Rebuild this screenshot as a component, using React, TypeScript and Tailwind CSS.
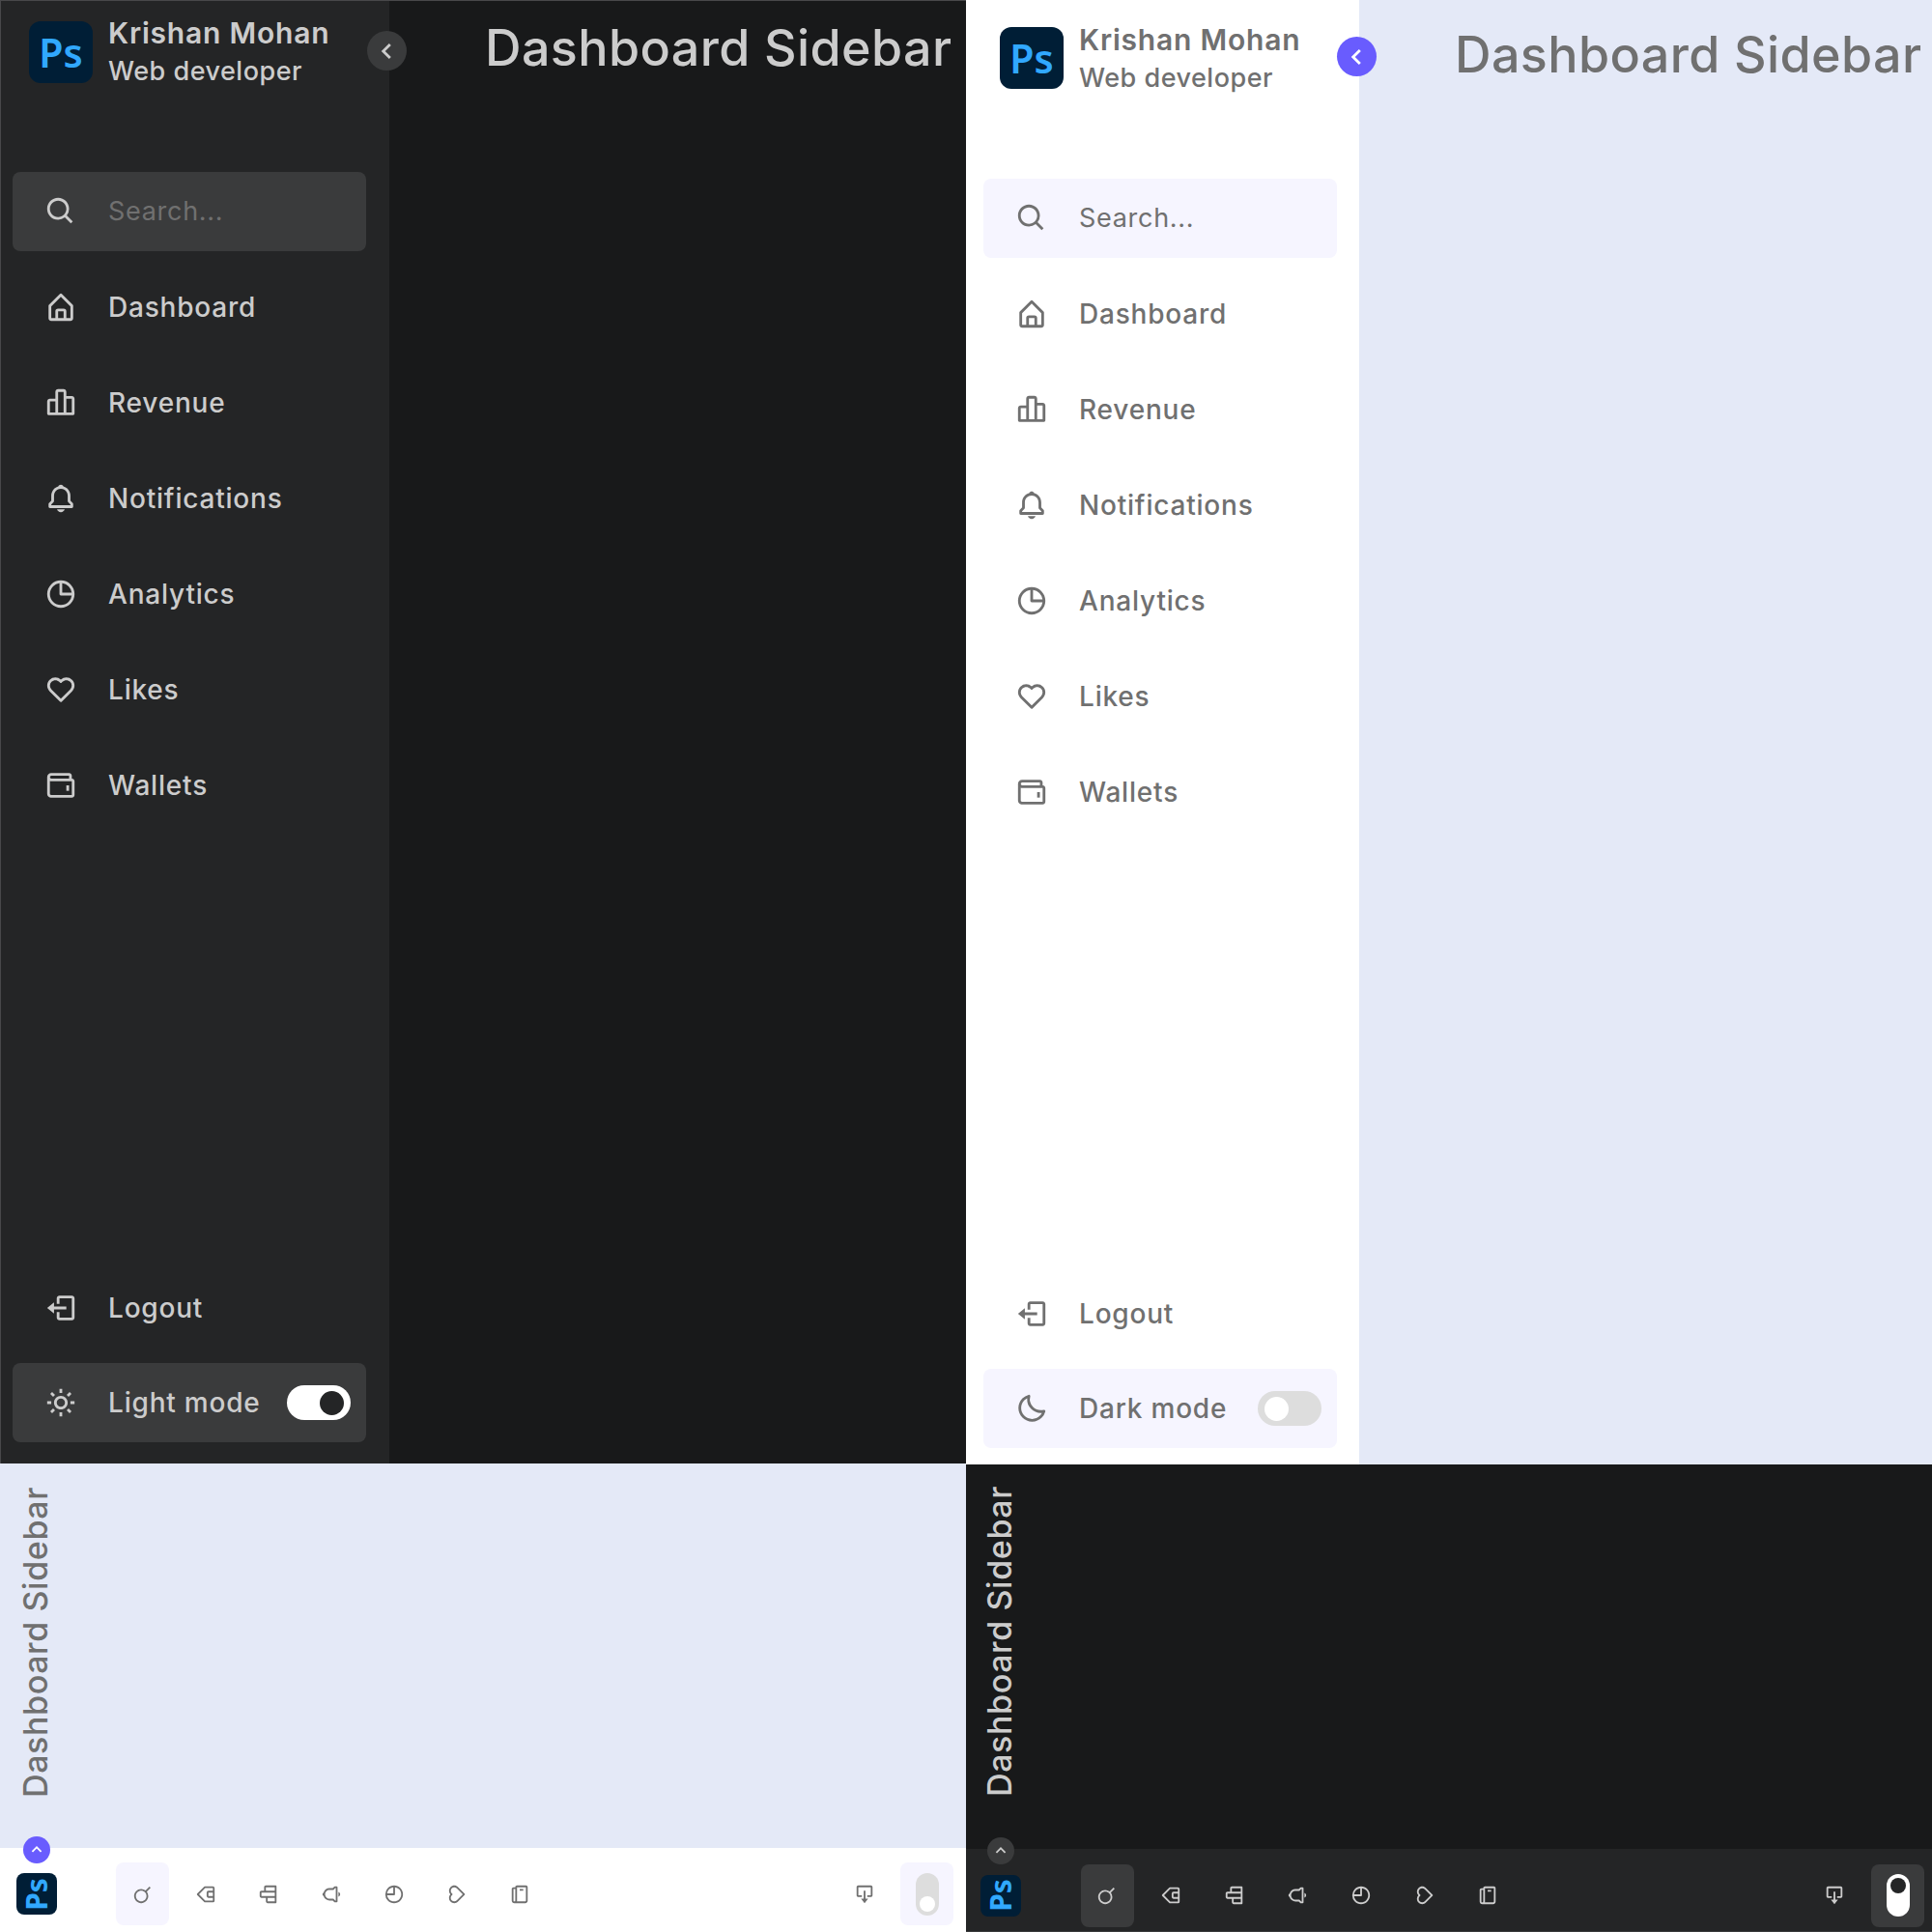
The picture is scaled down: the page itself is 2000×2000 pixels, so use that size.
import { IconType } from 'react-icons';
import {
    BiBarChartAlt2,
    BiBell,
    BiChevronLeft,
    BiChevronUp,
    BiHeart,
    BiHomeAlt,
    BiLogOut,
    BiMoon,
    BiPieChartAlt,
    BiSearch,
    BiSun,
    BiWallet,
} from 'react-icons/bi';

const font = "font-['Inter','Liberation_Sans',sans-serif]";

const links: { label: string; icon: IconType }[] = [
    { label: 'Dashboard', icon: BiHomeAlt },
    { label: 'Revenue', icon: BiBarChartAlt2 },
    { label: 'Notifications', icon: BiBell },
    { label: 'Analytics', icon: BiPieChartAlt },
    { label: 'Likes', icon: BiHeart },
    { label: 'Wallets', icon: BiWallet },
];

const barIcons: IconType[] = [BiSearch, BiHomeAlt, BiBarChartAlt2, BiBell, BiPieChartAlt, BiHeart, BiWallet];

function Logo({ vertical = false }: { vertical?: boolean }) {
    return (
        <div
            className={
                vertical
                    ? 'w-[42px] h-[43px] shrink-0 rounded-lg bg-[#001e36] flex items-center justify-center'
                    : 'w-[66px] h-[64px] shrink-0 rounded-xl bg-[#001e36] flex items-center justify-center'
            }
        >
            <span
                className={
                    vertical
                        ? "-rotate-90 text-[30px] leading-none font-bold text-[#31a8ff] font-['Noto_Sans',sans-serif]"
                        : "text-[41px] leading-none font-semibold text-[#31a8ff] font-['Noto_Sans',sans-serif]"
                }
            >
                Ps
            </span>
        </div>
    );
}

function Row({ label, icon: Icon, text }: { label: string; icon: IconType; text: string }) {
    return (
        <div className="h-[82px] flex items-center">
            <div className="w-[99px] flex justify-center">
                <Icon className={`w-[34px] h-[34px] ${text}`} />
            </div>
            <span className={`text-[28px] font-medium tracking-[0.8px] ${text}`}>{label}</span>
        </div>
    );
}

function Sidebar({ dark }: { dark: boolean }) {
    const text = dark ? 'text-[#cccccc]' : 'text-[#707070]';
    const box = dark ? 'bg-[#3a3b3c]' : 'bg-[#f6f5ff]';
    const Mode = dark ? BiSun : BiMoon;

    return (
        <div className={dark ? `h-full bg-[#18191a] flex border-t border-l border-[#48484a] ${font}` : `h-full bg-[#e4e9f7] flex ${font}`}>
            {/* Sidebar */}
            <aside
                className={
                    dark
                        ? 'relative w-[402px] shrink-0 bg-[#242526] flex flex-col pl-[12px] pr-[24px] pt-[21px] pb-[22px]'
                        : 'relative w-[407px] shrink-0 bg-white flex flex-col pl-[18px] pr-[23px] pt-[28px] pb-[17px]'
                }
            >
                <div className="h-[64px] flex items-center gap-[16px] pl-[17px]">
                    <Logo />
                    <div className={dark ? 'flex flex-col' : 'flex flex-col pt-[2px]'}>
                        <span className={`text-[30px] leading-[38px] font-semibold tracking-[0.8px] whitespace-nowrap ${text}`}>Krishan Mohan</span>
                        <span className={`mt-[2px] text-[27px] leading-[38px] font-medium tracking-[0.5px] whitespace-nowrap ${text}`}>Web developer</span>
                    </div>
                </div>

                <button
                    className={
                        dark
                            ? 'absolute top-[31px] -right-[18px] w-[41px] h-[41px] rounded-full bg-[#3a3b3c] flex items-center justify-center text-[#cccccc]'
                            : 'absolute top-[38px] -right-[18px] w-[41px] h-[41px] rounded-full bg-[#695cfe] flex items-center justify-center text-white'
                    }
                >
                    <BiChevronLeft className="w-[34px] h-[34px]" />
                </button>

                <div className={dark ? `mt-[92px] h-[82px] rounded-lg flex items-center ${box}` : `mt-[93px] h-[82px] rounded-lg flex items-center ${box}`}>
                    <div className="w-[99px] flex justify-center">
                        <BiSearch className={`w-[34px] h-[34px] ${text}`} />
                    </div>
                    <span className="text-[27px] tracking-[0.7px] text-[#707070]">Search...</span>
                </div>

                <nav className="mt-[17px] flex flex-col gap-[17px]">
                    {links.map((l) => (
                        <Row key={l.label} label={l.label} icon={l.icon} text={text} />
                    ))}
                </nav>

                <div className="mt-auto flex flex-col gap-[16px]">
                    <Row label="Logout" icon={BiLogOut} text={text} />
                    <div className={`h-[82px] rounded-lg flex items-center ${box}`}>
                        <div className="w-[99px] flex justify-center">
                            <Mode className={`w-[34px] h-[34px] ${text}`} />
                        </div>
                        <span className={`text-[28px] font-medium tracking-[0.8px] whitespace-nowrap ${text}`}>{dark ? 'Light mode' : 'Dark mode'}</span>
                        <div
                            className={
                                dark
                                    ? 'ml-auto mr-[16px] w-[66px] h-[36px] shrink-0 rounded-full bg-white flex items-center justify-end px-[7px]'
                                    : 'ml-auto mr-[16px] w-[66px] h-[36px] shrink-0 rounded-full bg-[#dddddd] flex items-center justify-start px-[7px]'
                            }
                        >
                            <div className={`w-[25px] h-[25px] rounded-full ${dark ? 'bg-[#242526]' : 'bg-white'}`} />
                        </div>
                    </div>
                </div>
            </aside>

            <main className={dark ? 'flex-1 pl-[99px] pt-[16px]' : 'flex-1 pl-[99px] pt-[24px]'}>
                <h1 className={`text-[52px] leading-[66px] font-medium tracking-[0.4px] whitespace-nowrap ${text}`}>Dashboard Sidebar</h1>
            </main>
        </div>
    );
}

function BottomBar({ dark }: { dark: boolean }) {
    const text = dark ? 'text-[#cccccc]' : 'text-[#707070]';
    const box = dark ? 'bg-[#3a3b3c]' : 'bg-[#f6f5ff]';

    return (
        <div className={`h-full ${dark ? 'bg-[#18191a]' : 'bg-[#e4e9f7]'} flex flex-col ${font}`}>
            <div className={dark ? 'flex-1 pl-[16px] pt-[22px]' : 'flex-1 pl-[18px] pt-[24px]'}>
                <h1 className={`[writing-mode:vertical-rl] rotate-180 text-[34px] leading-[38px] font-medium tracking-[0.6px] whitespace-nowrap ${text}`}>
                    Dashboard Sidebar
                </h1>
            </div>

            <div
                className={
                    dark
                        ? 'relative h-[86px] bg-[#242526] flex items-center gap-[10.7px] pl-[15px] pr-[8px] pt-[16px] pb-[5px] border-b border-[#3a3b3c]'
                        : 'relative h-[87px] bg-white flex items-center gap-[10px] pl-[17px] pr-[13px] pt-[15px] pb-[7px]'
                }
            >
                <button
                    className={
                        dark
                            ? 'absolute -top-[12px] left-[22px] w-[28px] h-[28px] rounded-full bg-[#3a3b3c] flex items-center justify-center text-[#cccccc]'
                            : 'absolute -top-[12px] left-[24px] w-[28px] h-[28px] rounded-full bg-[#695cfe] flex items-center justify-center text-white'
                    }
                >
                    <BiChevronUp className="w-[22px] h-[22px]" />
                </button>

                <div className="mr-[51px]">
                    <Logo vertical />
                </div>

                {barIcons.map((Icon, i) => (
                    <div key={i} className={`w-[55px] h-[65px] rounded-lg flex items-center justify-center ${i === 0 ? box : ''}`}>
                        <Icon className={`-rotate-90 w-[22px] h-[22px] ${text}`} />
                    </div>
                ))}

                <div className="ml-auto w-[55px] h-[65px] flex items-center justify-center">
                    <BiLogOut className={`-rotate-90 w-[22px] h-[22px] ${text}`} />
                </div>
                <div className={`w-[55px] h-[65px] rounded-lg flex items-center justify-center ${box}`}>
                    <div
                        className={
                            dark
                                ? 'w-[24px] h-[44px] rounded-full bg-white flex flex-col items-center justify-start pt-[4px]'
                                : 'w-[24px] h-[44px] rounded-full bg-[#dddddd] flex flex-col items-center justify-end pb-[4px]'
                        }
                    >
                        <div className={`w-[16px] h-[16px] rounded-full ${dark ? 'bg-[#242526]' : 'bg-white'}`} />
                    </div>
                </div>
            </div>
        </div>
    );
}

export default function App() {
    return (
        <div className="w-[2000px] h-[2000px] flex overflow-hidden">
            <div className="w-[1000px] flex flex-col overflow-hidden">
                <div className="h-[1515px]">
                    <Sidebar dark />
                </div>
                <div className="h-[485px]">
                    <BottomBar dark={false} />
                </div>
            </div>
            <div className="w-[1000px] flex flex-col overflow-hidden">
                <div className="h-[1516px]">
                    <Sidebar dark={false} />
                </div>
                <div className="h-[484px]">
                    <BottomBar dark />
                </div>
            </div>
        </div>
    );
}
